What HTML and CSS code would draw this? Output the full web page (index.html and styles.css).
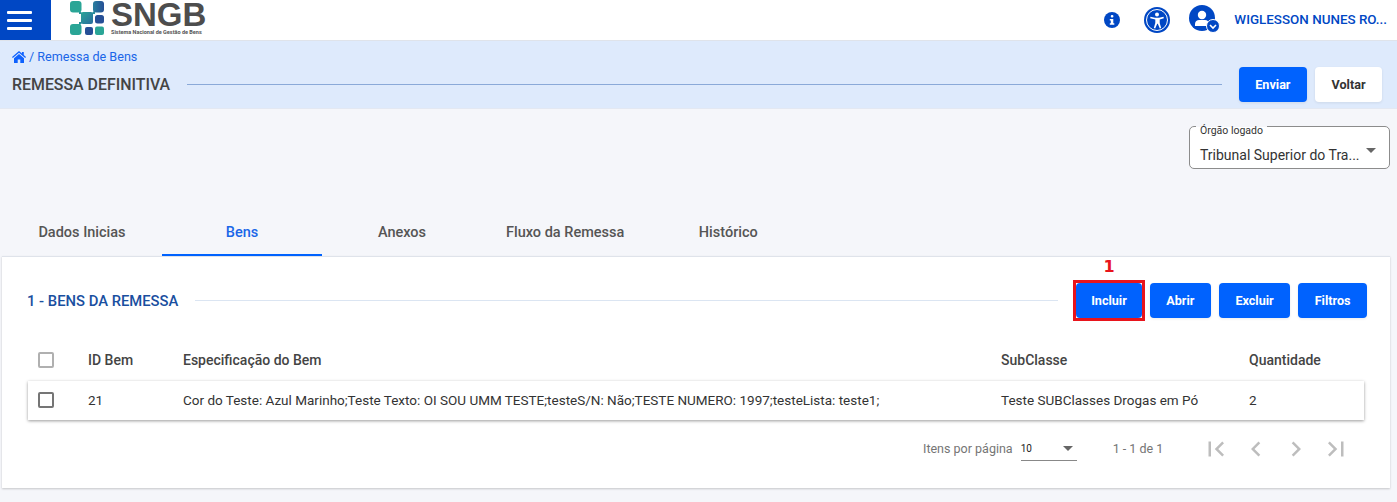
FILE: index.html
```html
<!DOCTYPE html>
<html lang="pt-BR">
<head>
  <meta charset="utf-8" />
  <title>Remessa de Bens - SNGB</title>
  <link rel="stylesheet" href="styles.css">
</head>
<body>
  <!-- Top bar -->
  <header class="topbar">
    <button class="menu-btn" aria-label="Menu">
      <span></span><span></span><span></span>
    </button>
    <div class="logo">
      <svg class="logo-mark" width="34" height="35" viewBox="0 0 34 35">
        <defs>
          <linearGradient id="crossA" x1="0" y1="0" x2="1" y2="1">
            <stop offset="0" stop-color="#2aa596"/>
            <stop offset="1" stop-color="#2a6c9e"/>
          </linearGradient>
          <linearGradient id="crossB" x1="1" y1="0" x2="0" y2="0">
            <stop offset="0" stop-color="#264f96"/>
            <stop offset="1" stop-color="#2a7f9e"/>
          </linearGradient>
        </defs>
        <path d="M9 10l4 4-4 0zM25 10l-4 4 4 0zM9 26l4-4-4 0z" fill="#2a8f9a"/>
        <rect x="0" y="1" width="11.500" height="11.500" rx="3" fill="#2aa596"/>
        <rect x="23" y="1" width="11" height="11.500" rx="3" fill="url(#crossB)"/>
        <rect x="11" y="12" width="12" height="12" rx="2" fill="url(#crossA)"/>
        <rect x="25" y="15" width="9" height="8.500" rx="2.500" fill="#264f96"/>
        <rect x="0" y="24" width="11.500" height="11" rx="3" fill="#2aa596"/>
        <rect x="15" y="27" width="8" height="8" rx="2" fill="#264f96"/>
        <rect x="25" y="26.500" width="9" height="8.500" rx="2" fill="#2aa596"/>
      </svg>
      <div class="logo-text">
        <span class="logo-name">SNGB</span>
        <span class="logo-sub">Sistema Nacional de Gestão de Bens</span>
      </div>
    </div>
    <div class="top-actions">
      <svg class="ic-info" width="16" height="16" viewBox="0 0 16 16">
        <circle cx="8" cy="8" r="8" fill="#0047c4"/>
        <rect x="6.800" y="3" width="2.600" height="2.600" rx="1" fill="#fff"/>
        <path d="M5.800 7h3.500v4.200h1v1.600H5.800v-1.600h1V8.600h-1z" fill="#fff"/>
      </svg>
      <svg class="ic-access" width="26" height="26" viewBox="0 0 26 26">
        <circle cx="13" cy="13" r="13" fill="#0047c4"/>
        <circle cx="13" cy="13" r="10.500" fill="none" stroke="#fff" stroke-width="1"/>
        <circle cx="13" cy="7.500" r="2" fill="#fff"/>
        <path d="M6.500 9.800l4.500 1h4l4.500-1 .4 1.400-4.200 1.200v3.600l1.500 5-1.400.5-2-4.800h-.6l-2 4.800-1.400-.5 1.500-5v-3.600L6.100 11.200z" fill="#fff"/>
      </svg>
      <svg class="ic-user" width="31" height="28" viewBox="0 0 31 28">
        <circle cx="13" cy="13" r="13" fill="#0047c4"/>
        <circle cx="13" cy="10" r="4.200" fill="#fff"/>
        <path d="M6 21v-2c0-2.500 2-4 4-4h6c2 0 4 1.500 4 4v2z" fill="#fff"/>
        <circle cx="24" cy="21" r="6.500" fill="#0047c4" stroke="#fff" stroke-width="1"/>
        <path d="M21 20l3 3 3-3" fill="none" stroke="#fff" stroke-width="1.600"/>
      </svg>
      <span class="user-name">WIGLESSON NUNES RO...</span>
    </div>
  </header>

  <!-- Page heading -->
  <section class="page-head">
    <div class="crumbs">
      <svg width="14" height="12" viewBox="0 0 14 12">
        <path d="M7 0L0 6l.8 1L7 1.800 13.200 7l.8-1-2.200-1.900V1h-1.900v1.500zM2 7.200V12h3.700V8.500h2.600V12H12V7.200L7 3z" fill="#0f62fe"/>
      </svg>
      <span>/ Remessa de Bens</span>
    </div>
    <div class="head-row">
      <h1>REMESSA DEFINITIVA</h1>
      <div class="head-line"></div>
      <button class="btn btn-primary btn-send">Enviar</button>
      <button class="btn btn-light">Voltar</button>
    </div>
  </section>

  <main class="content">
    <div class="org-row">
      <div class="org-select">
        <span class="org-label">Órgão logado</span>
        <span class="org-value">Tribunal Superior do Tra...</span>
        <span class="arrow arrow-org"></span>
      </div>
    </div>

    <nav class="tabs">
      <a class="tab">Dados Inicias</a>
      <a class="tab active">Bens</a>
      <a class="tab">Anexos</a>
      <a class="tab">Fluxo da Remessa</a>
      <a class="tab">Histórico</a>
    </nav>

    <section class="card">
      <div class="card-head">
        <h2>1 - BENS DA REMESSA</h2>
        <div class="card-line"></div>
        <div class="card-actions">
          <div class="marked">
            <span class="marker">1</span>
            <button class="btn btn-primary">Incluir</button>
          </div>
          <button class="btn btn-primary">Abrir</button>
          <button class="btn btn-primary">Excluir</button>
          <button class="btn btn-primary">Filtros</button>
        </div>
      </div>

      <div class="table">
        <div class="tr th">
          <div class="c-check"><span class="check check-light"></span></div>
          <div class="c-id">ID Bem</div>
          <div class="c-spec">Especificação do Bem</div>
          <div class="c-sub">SubClasse</div>
          <div class="c-qty">Quantidade</div>
        </div>
        <div class="tr td">
          <div class="c-check"><span class="check"></span></div>
          <div class="c-id">21</div>
          <div class="c-spec">Cor do Teste: Azul Marinho;Teste Texto: OI SOU UMM TESTE;testeS/N: Não;TESTE NUMERO: 1997;testeLista: teste1;</div>
          <div class="c-sub">Teste SUBClasses Drogas em Pó</div>
          <div class="c-qty">2</div>
        </div>
      </div>

      <div class="pager">
        <span class="pager-label">Itens por página</span>
        <div class="pager-size"><span>10</span><span class="arrow"></span></div>
        <span class="pager-range">1 - 1 de 1</span>
        <div class="pager-nav">
          <svg width="30" height="30" viewBox="0 0 24 24"><path d="M18.400 16.600L13.800 12l4.600-4.600L17 6l-6 6 6 6zM6 6h2v12H6z"/></svg>
          <svg width="30" height="30" viewBox="0 0 24 24"><path d="M15.400 7.400L14 6l-6 6 6 6 1.400-1.400L10.800 12z"/></svg>
          <svg width="30" height="30" viewBox="0 0 24 24"><path d="M10 6L8.600 7.400 13.200 12l-4.600 4.600L10 18l6-6z"/></svg>
          <svg width="30" height="30" viewBox="0 0 24 24"><path d="M5.600 7.400L10.200 12l-4.600 4.600L7 18l6-6-6-6zM16 6h2v12h-2z"/></svg>
        </div>
      </div>
    </section>
  </main>
</body>
</html>
```

FILE: styles.css
```css
* {
  box-sizing: border-box;
}

body {
  margin: 0;
  height: 502px;
  overflow: hidden;
  background-color: #f5f6fa;
  font-family: Roboto, "Liberation Sans", sans-serif;
  font-size: 13px;
  color: #333;
}

.topbar {
  display: flex;
  align-items: center;
  height: 41px;
  background-color: #fff;
  border-bottom: 1px solid #dfe3ea;
}

.menu-btn {
  display: flex;
  flex-direction: column;
  justify-content: center;
  gap: 5px;
  width: 51px;
  height: 40px;
  padding: 0 7px;
  border: none;
  background-color: #0047c4;
}

.menu-btn span {
  display: block;
  height: 3px;
  width: 25px;
  border-radius: 1px;
  background-color: #fff;
}

.logo {
  display: flex;
  align-items: flex-start;
  gap: 7px;
  height: 40px;
  margin-left: 19px;
}

.logo-text {
  display: flex;
  flex-direction: column;
}

.logo-name {
  padding-top: 1px;
  font-family: "Liberation Sans", sans-serif;
  font-weight: 700;
  font-size: 33px;
  line-height: 28px;
  color: #4d4d4d;
}

.logo-sub {
  font-size: 5.500px;
  font-weight: 700;
  line-height: 6px;
  color: #555;
}

.top-actions {
  display: flex;
  align-items: center;
  margin-left: auto;
  padding-right: 10px;
}

.ic-info {
  margin-right: 24px;
}

.ic-access {
  margin-right: 19px;
}

.ic-user {
  margin-right: 14px;
  margin-bottom: 2px;
}

.user-name {
  margin-bottom: 2px;
  font-size: 13.400px;
  font-weight: 500;
  color: #0047c4;
}

.page-head {
  height: 68px;
  padding: 9px 15px 0 12px;
  background-color: #deeafc;
  border-bottom: 1px solid #e3e8f2;
}

.crumbs {
  display: flex;
  align-items: center;
  gap: 3px;
  font-size: 12.600px;
  line-height: 14px;
  color: #1a66e8;
}

.head-row {
  display: flex;
  align-items: center;
  margin-top: 3px;
}

.head-row h1 {
  margin: 0;
  font-size: 15.900px;
  font-weight: 500;
  color: #444;
}

.head-line {
  flex: 1;
  height: 1px;
  margin: 0 17px;
  background-color: #8aa9d8;
}

.btn {
  height: 35px;
  border: none;
  border-radius: 4px;
  padding: 0 16.500px;
  font-family: inherit;
  font-size: 12.600px;
  font-weight: 700;
  box-shadow: 0 1px 3px rgba(0, 0, 0, 0.08);
}

.btn-primary {
  background-color: #0062fe;
  color: #fff;
}

.btn-light {
  background-color: #fff;
  color: #333;
}

.btn-send {
  margin-right: 8px;
}

.org-row {
  display: flex;
  justify-content: flex-end;
  padding: 17px 7px 0 0;
}

.org-select {
  position: relative;
  display: flex;
  align-items: center;
  width: 201px;
  height: 43px;
  padding: 14px 10px 0;
  background-color: #fff;
  border: 1px solid #8c8c8c;
  border-radius: 5px;
}

.org-label {
  position: absolute;
  top: -2px;
  left: 6px;
  padding: 0 4px;
  font-size: 10.500px;
  line-height: 12px;
  background: linear-gradient(to bottom, #f5f6fa 15%, #fff 15%);
}

.org-value {
  font-size: 14px;
  color: #333;
}

.arrow {
  display: block;
  width: 0;
  height: 0;
  border-left: 5px solid transparent;
  border-right: 5px solid transparent;
  border-top: 5px solid #666;
}

.arrow-org {
  position: absolute;
  right: 13px;
  top: 21px;
}

.tabs {
  display: flex;
  height: 47px;
  margin-top: 40px;
  padding-left: 2px;
}

.tab {
  display: flex;
  align-items: center;
  justify-content: center;
  min-width: 160px;
  height: 47px;
  padding: 2px 24px 0;
  border-bottom: 2px solid transparent;
  font-size: 14.500px;
  font-weight: 500;
  color: #555;
}

.tab.active {
  color: #1a66e8;
  border-bottom-color: #0062fe;
}

.card {
  height: 232px;
  margin: 0 7px 0 2px;
  background-color: #fff;
  border-top: 1px solid #dfe3ea;
  box-shadow: 0 1px 2px rgba(0, 0, 0, 0.2);
}

.card-head {
  display: flex;
  align-items: center;
  height: 67px;
  padding: 20px 23px 0 25px;
}

.card-head h2 {
  margin: 0;
  font-size: 14.800px;
  font-weight: 500;
  color: #1a4fa0;
}

.card-line {
  flex: 1;
  height: 1px;
  margin: 0 18px 0 17px;
  background-color: #dbe5f2;
}

.card-actions {
  display: flex;
  gap: 8px;
}

.marked {
  position: relative;
  outline: 3px solid #e8141c;
}

.marked .btn {
  padding: 0 15px;
}

.marker {
  position: absolute;
  top: -26px;
  left: 0;
  right: 0;
  font-family: "DejaVu Sans", sans-serif;
  font-size: 16px;
  font-weight: 700;
  line-height: 20px;
  text-align: center;
  color: #e8141c;
}

.table {
  margin: 0 26px 0 26px;
}

.tr {
  display: flex;
  align-items: center;
}

.th {
  height: 42px;
  margin-top: 15px;
  font-size: 14px;
  font-weight: 500;
  color: #444;
}

.td {
  height: 39px;
  padding-bottom: 1px;
  font-size: 13.500px;
  background-color: #fff;
  box-shadow: 0 1px 3px rgba(0, 0, 0, 0.4);
}

.c-check {
  display: flex;
  width: 60px;
  padding-left: 10px;
}

.c-id {
  width: 95px;
}

.c-spec {
  width: 818px;
}

.c-sub {
  width: 248px;
}

.check {
  width: 16px;
  height: 16px;
  border: 2px solid #757575;
  border-radius: 2px;
}

.check-light {
  border-color: #b0b0b0;
}

.pager {
  display: flex;
  align-items: center;
  height: 57px;
  padding-left: 921px;
  font-size: 12.500px;
  color: #757575;
}

.pager-size {
  display: flex;
  align-items: center;
  justify-content: space-between;
  width: 56px;
  height: 24px;
  margin: 0 36px 0 8px;
  padding: 0 4px 0 0;
  font-size: 10px;
  color: #222;
  border-bottom: 1px solid #888;
}

.pager-nav {
  display: flex;
  gap: 10px;
  margin-left: 38px;
}

.pager-nav svg {
  fill: #bdbdbd;
}
```
